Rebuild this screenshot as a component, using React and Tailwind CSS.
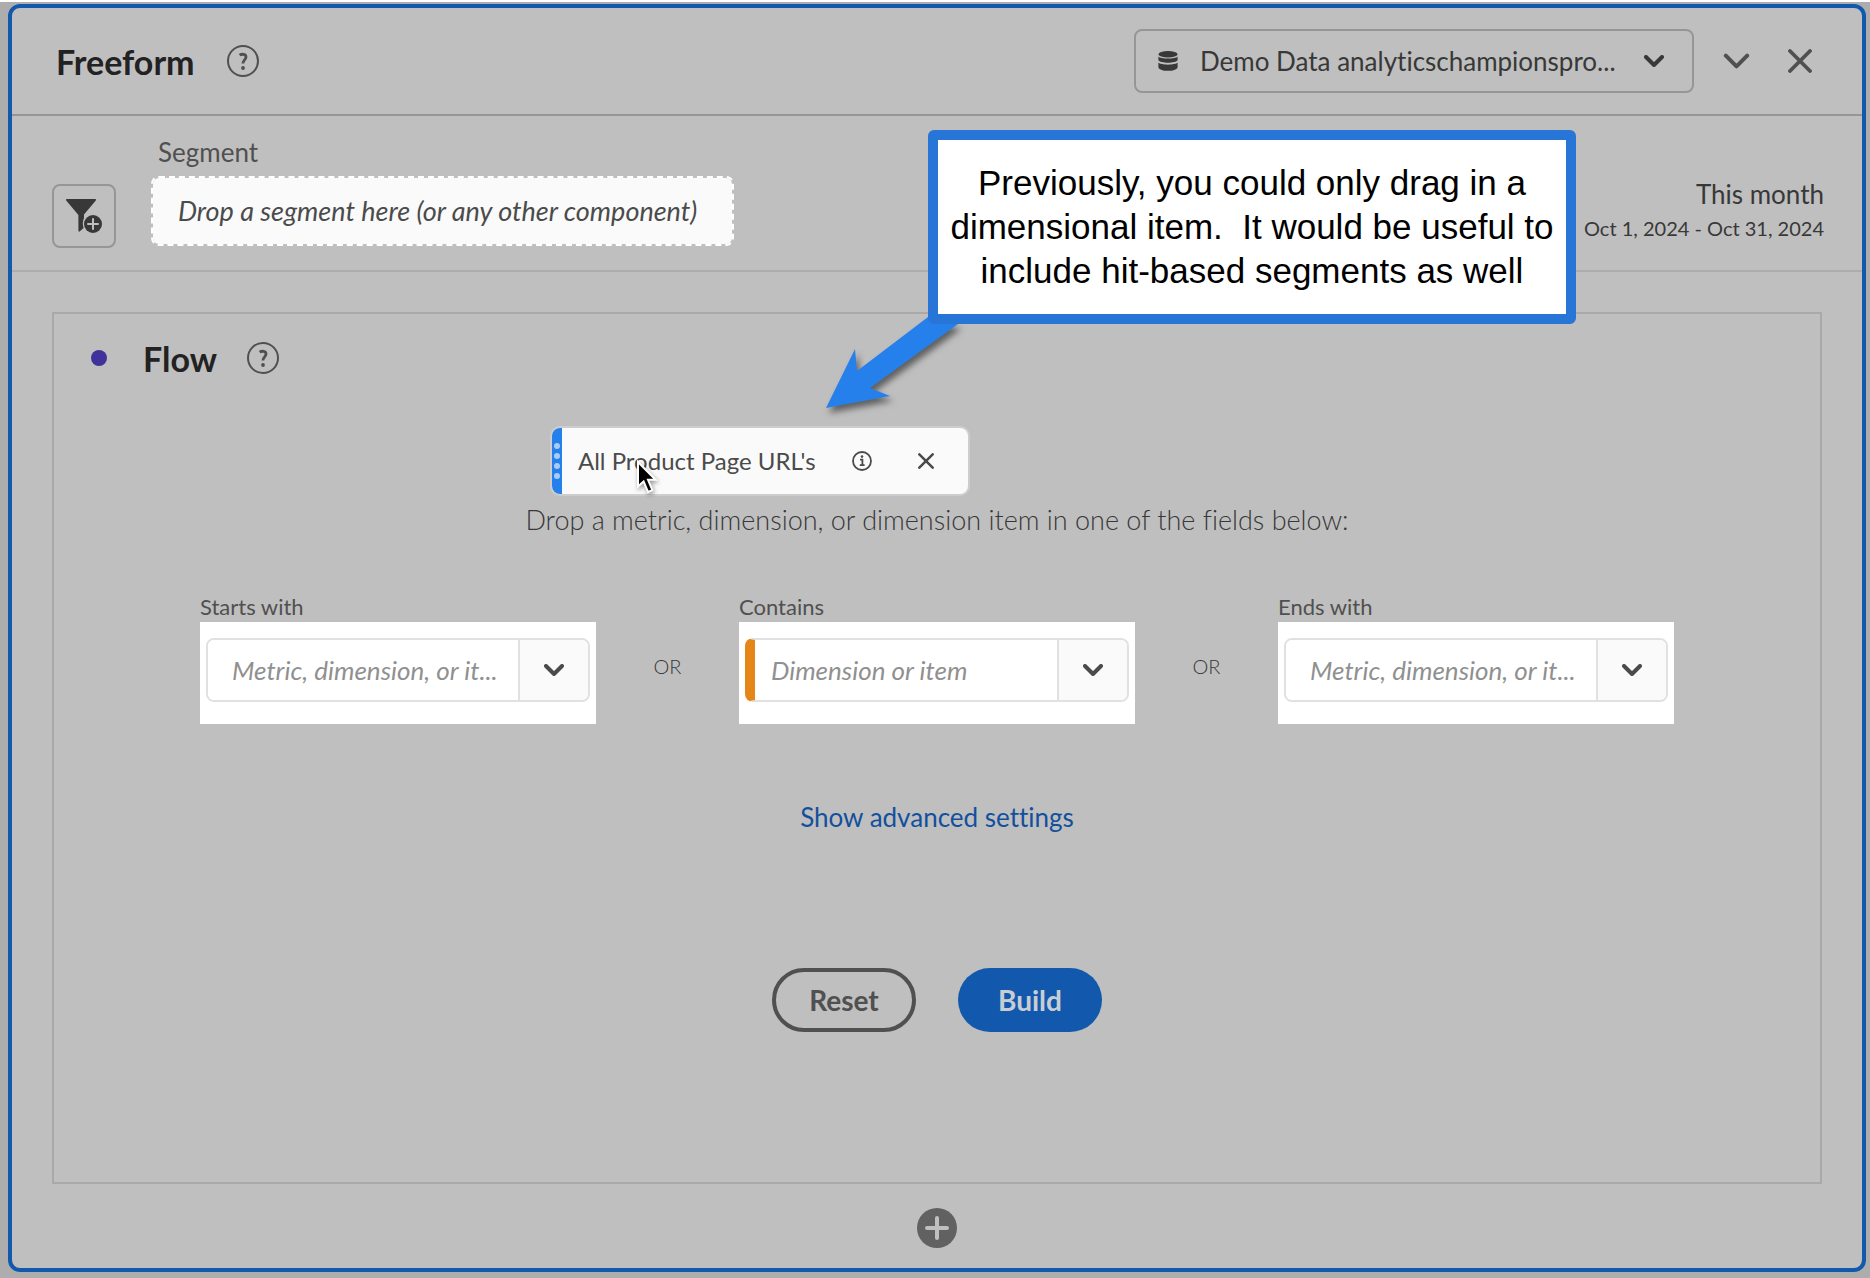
const FIELDS = [
  { id: 'starts-with', label: 'Starts with', placeholder: 'Metric, dimension, or it...' },
  { id: 'contains', label: 'Contains', placeholder: 'Dimension or item', accent: true },
  { id: 'ends-with', label: 'Ends with', placeholder: 'Metric, dimension, or it...' },
]

function Chevron({ className, strokeWidth = 4 }) {
  return (
    <svg viewBox="0 0 20 12" className={className} fill="none" stroke="currentColor" strokeWidth={strokeWidth} strokeLinecap="round" strokeLinejoin="round">
      <path d="M2 2 L10 10 L18 2" />
    </svg>
  )
}

function Cross({ className }) {
  return (
    <svg viewBox="0 0 24 24" className={className} fill="none" stroke="currentColor" strokeWidth="3.8" strokeLinecap="round">
      <path d="M2 2 L22 22 M22 2 L2 22" />
    </svg>
  )
}

function HelpButton({ label }) {
  return (
    <button type="button" aria-label={label} className="shrink-0 text-[#505050]">
      <svg viewBox="0 0 32 32" className="size-8" fill="none" stroke="currentColor">
        <circle cx="16" cy="16" r="15" strokeWidth="2" />
        <path d="M12.6 10.2 C15 8.6 19 9 19 12 C19 14.8 15.9 15 15.9 18.6" strokeWidth="2.8" />
        <circle cx="16" cy="23" r="1.9" fill="currentColor" stroke="none" />
      </svg>
    </button>
  )
}

function DatabaseIcon() {
  return (
    <svg viewBox="0 0 20 20" className="size-5 shrink-0" fill="#383838">
      <ellipse cx="10" cy="3.2" rx="9.6" ry="3.2" />
      <path d="M0.4 5.4 C2.5 8.2 17.5 8.2 19.6 5.4 V9 C18 12.6 2 12.6 0.4 9 Z" />
      <path d="M0.4 11.6 C2.5 14.4 17.5 14.4 19.6 11.6 V16.4 C18 21 2 21 0.4 16.4 Z" />
    </svg>
  )
}

function FilterAddIcon() {
  return (
    <svg viewBox="0 0 36 36" className="size-9">
      <path d="M0.6 1 H29.4 Q30.4 1.4 29.8 2.4 L18 16.6 V20 C16.6 23 16.4 27 17.6 30 L13.6 33.6 Q12.4 34 12.4 32.6 V17 L0.2 2.4 Q-0.2 1.4 0.6 1 Z" fill="#383838" />
      <circle cx="27" cy="26" r="9" fill="#383838" />
      <path d="M27 21 V31 M22 26 H32" stroke="#bfbfbf" strokeWidth="2" strokeLinecap="round" />
    </svg>
  )
}

function DropField({ id, label, placeholder, accent }) {
  return (
    <div className="w-[396px]">
      <label htmlFor={id} className="block text-[22px] leading-[30px] text-[#505050]">
        {label}
      </label>
      <div className="bg-white px-[6px] pt-4 pb-[22px]">
        <div
          className={`flex h-16 overflow-hidden rounded-lg border-2 border-[#e1e1e1] ${accent ? 'border-l-[10px] border-l-[#e68619]' : ''}`}
        >
          <input
            id={id}
            type="text"
            placeholder={placeholder}
            className={`min-w-0 flex-1 bg-white text-[26px] italic text-[#505050] placeholder:text-[#909090] outline-none ${accent ? 'pl-4' : 'pl-6'}`}
          />
          <button type="button" aria-label={`${label} options`} className="flex w-[70px] items-center justify-center border-l-2 border-[#e1e1e1] bg-[#fafafa] text-[#4b4b4b]">
            <Chevron className="h-3 w-5" />
          </button>
        </div>
      </div>
    </div>
  )
}

function DraggedSegment() {
  return (
    <div className="absolute left-[calc(50%-385px)] top-[114px] flex h-[66px] w-[416px] items-center overflow-hidden rounded-lg bg-[#fafafa] text-[#4b4b4b] ring-2 ring-[#cdcdcd]">
      <div className="flex h-full w-[10px] flex-col items-center justify-center gap-1 bg-[#2680eb]">
        <span className="size-[6px] rounded-full bg-[#a8ccf7]" />
        <span className="size-[6px] rounded-full bg-[#a8ccf7]" />
        <span className="size-[6px] rounded-full bg-[#a8ccf7]" />
        <span className="size-[6px] rounded-full bg-[#a8ccf7]" />
      </div>
      <span className="flex-1 pl-4 text-[24px] whitespace-nowrap">All Product Page URL's</span>
      <button type="button" aria-label="Segment info" className="mr-[46px]">
        <svg viewBox="0 0 20 20" className="size-5" fill="none" stroke="currentColor">
          <circle cx="10" cy="10" r="9" strokeWidth="1.8" />
          <path d="M8 8.6 H10.4 V14 M7.8 14.2 H12.6" strokeWidth="1.8" />
          <circle cx="10" cy="5.6" r="1.3" fill="currentColor" stroke="none" />
        </svg>
      </button>
      <button type="button" aria-label="Remove segment" className="mr-[34px]">
        <Cross className="size-4" />
      </button>
    </div>
  )
}

function Cursor() {
  return (
    <svg viewBox="0 0 26 38" className="absolute left-[calc(50%-302px)] top-[145px] h-[38px] w-[26px] drop-shadow-[1px_2px_2px_rgba(0,0,0,0.4)]">
      <path d="M3 3 V27.5 L8.6 22.4 L13 33 L17.4 31.2 L13 20.8 H20.6 Z" fill="#000" stroke="#fff" strokeWidth="2" />
    </svg>
  )
}

function Callout() {
  return (
    <div className="absolute left-[calc(50%-9px)] top-[122px] w-[648px]">
      <svg viewBox="0 0 150 110" className="absolute -left-[108px] top-[180px] h-[110px] w-[150px] drop-shadow-[3px_5px_3px_rgba(0,0,0,0.5)]">
        <path d="M6 98 L35 39 L37 61 L108 7 L138 14 L50 78 L70 86 Z" fill="#2680eb" />
      </svg>
      <p className="relative rounded-md border-[10px] border-[#2675d7] bg-white py-[21px] text-center font-['Liberation_Sans',sans-serif] text-[35px] leading-[44px] whitespace-pre text-black">
        {'Previously, you could only drag in a\ndimensional item.  It would be useful to\ninclude hit-based segments as well'}
      </p>
    </div>
  )
}

export default function App() {
  return (
    <div className="flex min-h-screen flex-col border-t-2 border-white bg-[#adadad] pt-[2px] pr-1 pb-[6px] pl-2 font-['Lato',sans-serif] [font-variant-ligatures:none]">
      <main className="relative flex flex-1 flex-col rounded-xl border-4 border-[#1259ad] bg-[#bfbfbf]">
        {/* Panel header */}
        <header className="flex h-[108px] items-center border-b-2 border-[#969696] pr-[50px] pl-11">
          <h1 className="mr-8 text-[34px] font-bold text-[#222222]">Freeform</h1>
          <HelpButton label="About Freeform" />
          <label className="ml-auto flex h-16 w-[560px] items-center rounded-lg border-2 border-[#969696] pr-7 pl-[22px] text-[#383838]">
            <DatabaseIcon />
            <select aria-label="Report suite" className="ml-[22px] min-w-0 flex-1 appearance-none bg-transparent text-[26px] outline-none">
              <option>Demo Data analyticschampionspro...</option>
            </select>
            <Chevron className="h-3 w-5" />
          </label>
          <button type="button" aria-label="Collapse panel" className="ml-[29px] text-[#505050]">
            <Chevron className="h-4 w-[27px]" strokeWidth={3} />
          </button>
          <button type="button" aria-label="Close panel" className="ml-[38px] text-[#505050]">
            <Cross className="size-6" />
          </button>
        </header>

        {/* Segment and date range */}
        <section className="flex h-[156px] items-start border-b-2 border-[#adadad] pr-[38px] pl-10">
          <button type="button" aria-label="Add filter" className="mt-[68px] flex size-16 items-center justify-center rounded-lg border-2 border-[#969696]">
            <FilterAddIcon />
          </button>
          <div className="ml-[35px] pt-[18px]">
            <div className="pl-[7px] text-[26px] leading-9 text-[#505050]">Segment</div>
            <div className="mt-[6px] flex h-[70px] w-[583px] items-center rounded-lg border-2 border-dashed border-white bg-[#fafafa] bg-clip-padding pl-[25px] text-[27px] italic text-[#4b4b4b]">
              Drop a segment here (or any other component)
            </div>
          </div>
          <button type="button" className="mt-[60px] ml-auto text-right text-[#383838]">
            <span className="block text-[26px] leading-9">This month</span>
            <span className="block text-[20px] leading-8">Oct 1, 2024 - Oct 31, 2024</span>
          </button>
        </section>

        {/* Flow visualization */}
        <section className="relative mx-10 mt-10 flex flex-1 flex-col items-center border-2 border-[#a9a9a9]">
          <div className="flex h-[88px] items-center self-stretch pl-[37px]">
            <span className="size-4 rounded-full bg-[#3f339b]" />
            <h2 className="mr-[30px] ml-9 text-[34px] font-bold text-[#222222]">Flow</h2>
            <HelpButton label="About Flow" />
          </div>
          <p className="mt-[100px] text-[27px] leading-9 font-light text-[#383838]">
            Drop a metric, dimension, or dimension item in one of the fields below:
          </p>
          <div className="mt-[54px] flex justify-center">
            {FIELDS.map((field, i) => (
              <div key={field.id} className="flex">
                {i > 0 && <span className="w-[143px] pt-[59px] text-center text-[20px] leading-[30px] font-light text-[#383838]">OR</span>}
                <DropField {...field} />
              </div>
            ))}
          </div>
          <a href="#advanced" className="mt-[75px] text-[26px] leading-9 text-[#12509e]">
            Show advanced settings
          </a>
          <div className="mt-[133px] mb-[150px] flex gap-[42px] text-[28px] font-bold">
            <button type="button" className="h-16 w-36 rounded-full border-4 border-[#505050] text-[#505050]">
              Reset
            </button>
            <button type="button" className="h-16 w-36 rounded-full bg-[#1259ad] text-[#c8cdd4]">
              Build
            </button>
          </div>
          <DraggedSegment />
          <Cursor />
        </section>

        <footer className="flex h-[84px] items-center justify-center pt-1">
          <button type="button" aria-label="Add visualization">
            <svg viewBox="0 0 40 40" className="size-10">
              <circle cx="20" cy="20" r="20" fill="#616161" />
              <path d="M20 10 V30 M10 20 H30" stroke="#bfbfbf" strokeWidth="4" strokeLinecap="round" />
            </svg>
          </button>
        </footer>

        <Callout />
      </main>
    </div>
  )
}
